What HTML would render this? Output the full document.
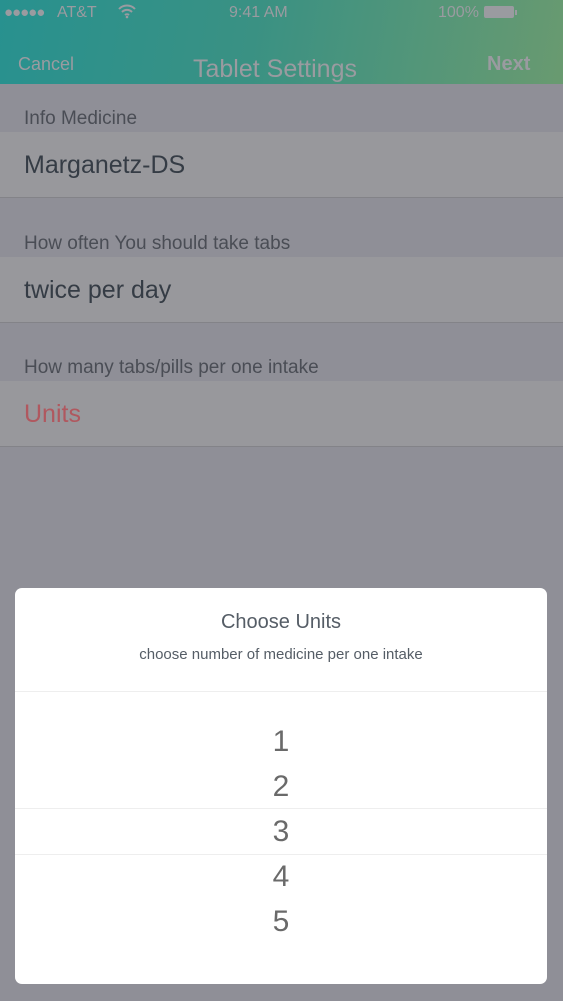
<!DOCTYPE html>
<html><head><style>
body{margin:0;width:563px;height:1001px;overflow:hidden;background:#8f8f97;font-family:"Liberation Sans",sans-serif;position:relative}
.hdr{position:absolute;left:0;top:0;width:563px;height:84px;background:linear-gradient(100deg,#28918f 0%,#3a9183 45%,#699a70 100%)}
.t{position:absolute;color:#9a9ba0;white-space:nowrap}
.lbl{position:absolute;left:24px;font-size:19px;color:#4a4d55}
.row{position:absolute;left:0;width:563px;height:65px;background:#98989c;border-bottom:1px solid #838388}
.row span{position:absolute;left:24px;top:19px;font-size:25px;color:#353c45}
.modal{position:absolute;left:15px;top:588px;width:532px;height:396px;background:#fff;border-radius:7px}
.n{position:absolute;left:0;width:532px;text-align:center;font-size:30px;color:#6a6a6a}
.ln{position:absolute;left:0;width:532px;height:1px;background:#eeeeee}
</style></head><body>
<div class="hdr"></div>
<div class="t" style="left:4px;top:4px;font-size:15px;letter-spacing:-1px">●●●●●</div>
<div class="t" style="left:57px;top:4px;font-size:16px">AT&amp;T</div>
<svg style="position:absolute;left:117px;top:3px" width="20" height="16" viewBox="0 0 20 16"><path d="M2 6a11 11 0 0 1 16 0M5 9a7 7 0 0 1 10 0M8 12a3 3 0 0 1 4 0" stroke="#9a9ba0" stroke-width="2" fill="none"/><circle cx="10" cy="14" r="1.3" fill="#9a9ba0"/></svg>
<div class="t" style="left:229px;top:4px;font-size:16px">9:41 AM</div>
<div class="t" style="left:438px;top:4px;font-size:16px">100%</div>
<div style="position:absolute;left:484px;top:6px;width:30px;height:12px;background:#9a9ba0;border-radius:2px"></div>
<div style="position:absolute;left:515px;top:10px;width:2px;height:5px;background:#9a9ba0"></div>
<div class="t" style="left:18px;top:54px;font-size:18px">Cancel</div>
<div class="t" style="left:193px;top:55px;font-size:25px">Tablet Settings</div>
<div class="t" style="left:487px;top:53px;font-size:20px;font-weight:bold">Next</div>
<div class="lbl" style="top:108px">Info Medicine</div>
<div class="row" style="top:132px"><span>Marganetz-DS</span></div>
<div class="lbl" style="top:233px">How often You should take tabs</div>
<div class="row" style="top:257px"><span>twice per day</span></div>
<div class="lbl" style="top:357px">How many tabs/pills per one intake</div>
<div class="row" style="top:381px"><span style="color:#b0585f">Units</span></div>
<div class="modal">
<div style="position:absolute;left:0;top:23px;width:532px;text-align:center;font-size:20px;color:#555d66">Choose Units</div>
<div style="position:absolute;left:0;top:58px;width:532px;text-align:center;font-size:15px;color:#555d66">choose number of medicine per one intake</div>
<div class="ln" style="top:103px"></div>
<div class="n" style="top:137px">1</div>
<div class="n" style="top:182px">2</div>
<div class="ln" style="top:220px"></div>
<div class="n" style="top:227px">3</div>
<div class="ln" style="top:266px"></div>
<div class="n" style="top:272px">4</div>
<div class="n" style="top:317px">5</div>
</div>
</body></html>
